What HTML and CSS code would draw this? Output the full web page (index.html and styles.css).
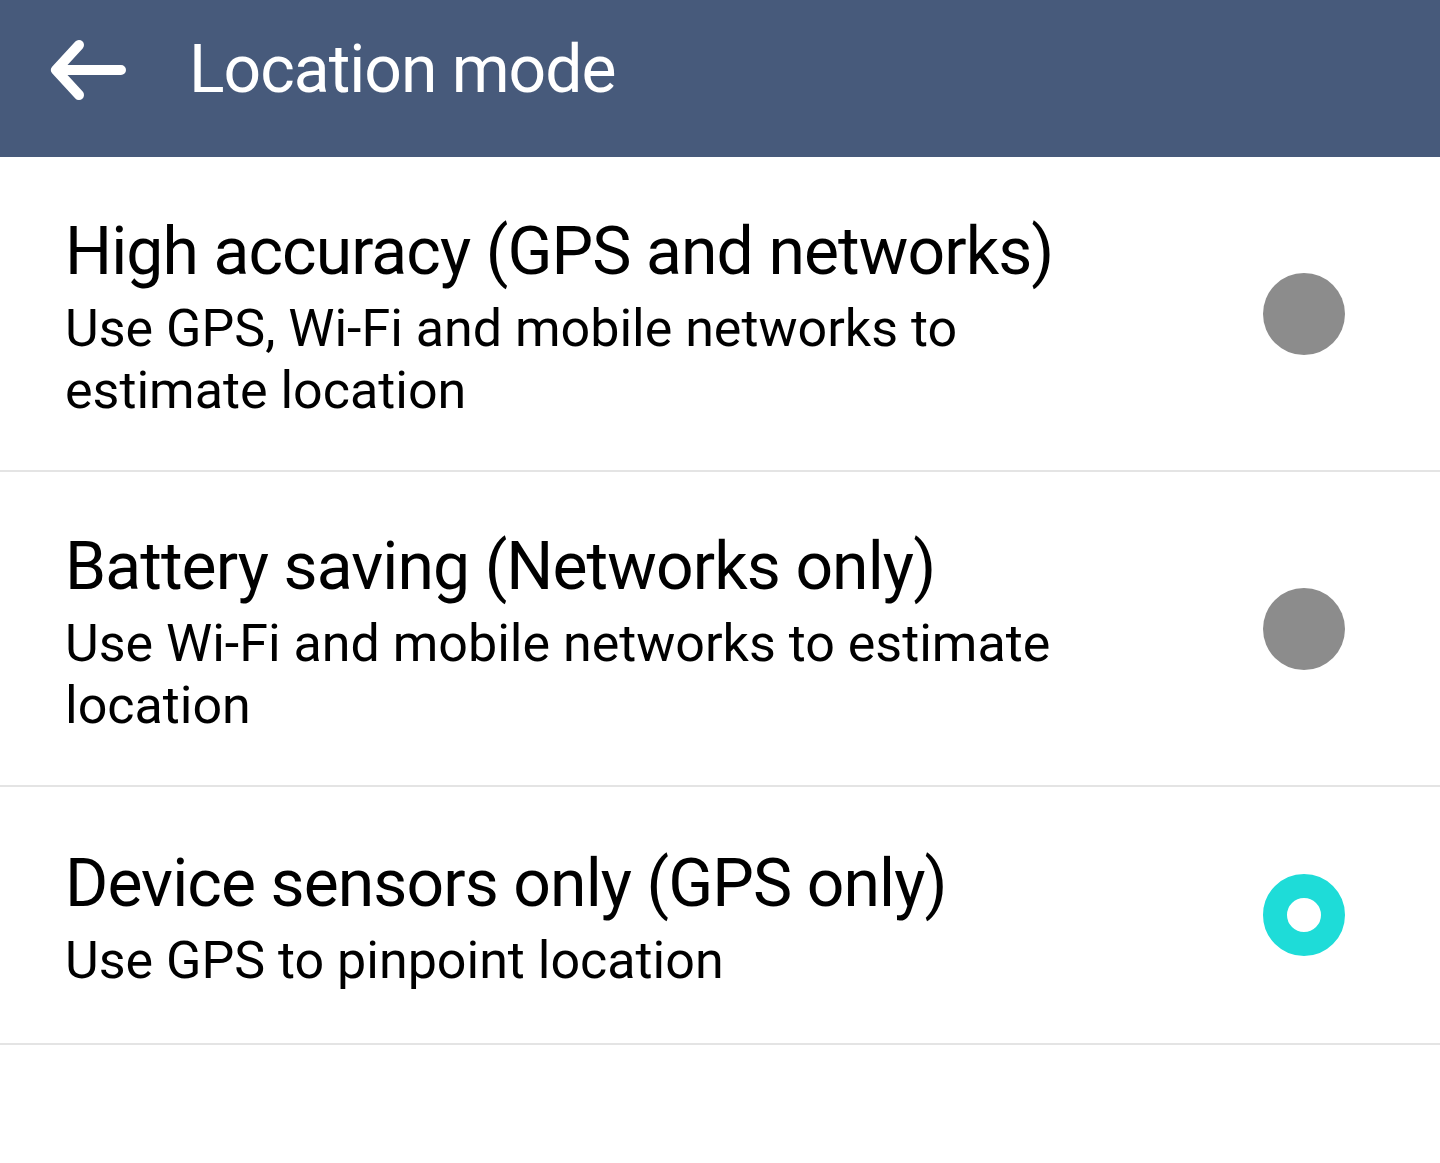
FILE: index.html
```html
<!DOCTYPE html>
<html lang="en">
<head>
    <meta charset="UTF-8">
    <meta name="viewport" content="width=device-width, initial-scale=1.0">
    <title>Location mode</title>
    <link rel="stylesheet" href="styles.css">
</head>
<body>
    <header class="toolbar">
        <svg class="back" width="80" height="62" viewBox="0 0 80 62">
            <path d="M8 31 H73 M31 6 L8 31 L31 56" fill="none" stroke="#fff" stroke-width="10" stroke-linecap="round" stroke-linejoin="round"/>
        </svg>
        <h1>Location mode</h1>
    </header>

    <div class="list">
        <div class="item">
            <div class="text">
                <div class="title">High accuracy (GPS and networks)</div>
                <div class="summary">Use GPS, Wi-Fi and mobile networks to<br>estimate location</div>
            </div>
            <span class="radio"></span>
        </div>
        <div class="item">
            <div class="text">
                <div class="title">Battery saving (Networks only)</div>
                <div class="summary">Use Wi-Fi and mobile networks to estimate<br>location</div>
            </div>
            <span class="radio"></span>
        </div>
        <div class="item short">
            <div class="text">
                <div class="title">Device sensors only (GPS only)</div>
                <div class="summary">Use GPS to pinpoint location</div>
            </div>
            <span class="radio checked"></span>
        </div>
    </div>
</body>
</html>
```

FILE: styles.css
```css
body {
    margin: 0;
    font-family: Roboto, "Noto Sans", sans-serif;
    background: #fff;
    color: #000;
}
.toolbar {
    height: 157px;
    background: #475a7b;
    display: flex;
    align-items: center;
    padding-left: 48px;
    box-sizing: border-box;
}
.back {
    margin-top: -18px;
}
.toolbar h1 {
    margin: -18px 0 0 61px;
    font-size: 66px;
    font-weight: 400;
    letter-spacing: -1px;
    color: #fff;
}
.item {
    height: 313px;
    display: flex;
    align-items: center;
    padding: 0 95px 0 65px;
    border-bottom: 2px solid #e4e4e4;
}
.item.short {
    height: 256px;
}
.text {
    flex: 1;
    padding-top: 6px;
}
.title {
    font-size: 66px;
    line-height: 80px;
    letter-spacing: -0.9px;
}
.summary {
    margin-top: 6px;
    font-size: 52px;
    line-height: 62px;
}
.radio {
    width: 82px;
    height: 82px;
    border-radius: 50%;
    background: #8c8c8c;
    box-sizing: border-box;
}
.radio.checked {
    background: #fff;
    border: 24px solid #1edcd8;
}
```
